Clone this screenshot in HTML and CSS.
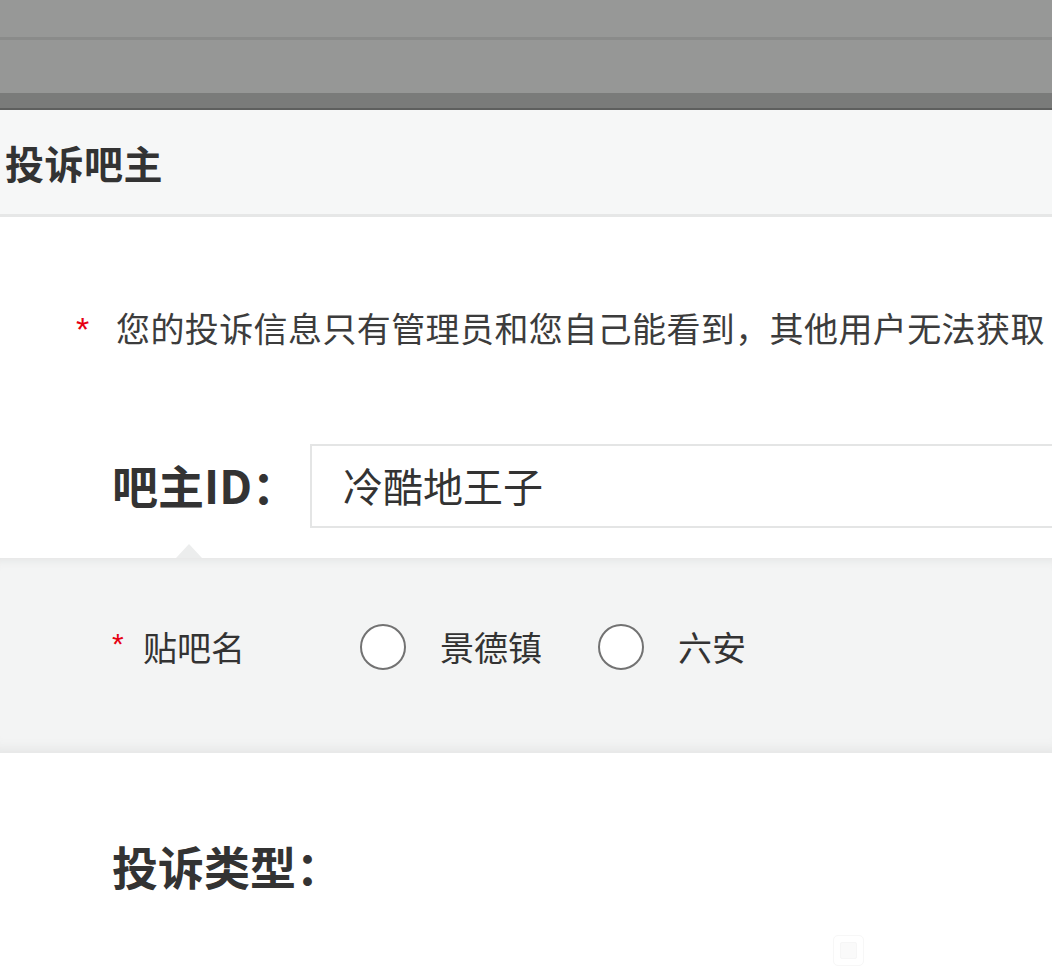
FILE: index.html
```html
<!DOCTYPE html>
<html lang="zh-CN">
<head>
<meta charset="utf-8">
<title>投诉吧主</title>
<link rel="stylesheet" href="styles.css">
</head>
<body>
<div class="topbar">
  <div class="band band-a"></div>
  <div class="band band-line"></div>
  <div class="band band-b"></div>
  <div class="band band-c"></div>
  <div class="band band-d"></div>
</div>
<div class="titlebar"><h1 class="title">投诉吧主</h1></div>
<p class="notice"><span class="star">*</span><span class="notice-text">您的投诉信息只有管理员和您自己能看到，其他用户无法获取</span></p>
<div class="id-row">
  <label class="id-label">吧主ID：</label>
  <div class="id-input">冷酷地王子</div>
</div>
<div class="panel">
  <span class="arrow"></span>
  <div class="panel-row">
    <span class="req"><span class="star small">*</span>贴吧名</span>
    <span class="option"><span class="radio"></span><span class="opt-text">景德镇</span></span>
    <span class="option"><span class="radio"></span><span class="opt-text">六安</span></span>
  </div>
</div>
<div class="type-row">
  <h2 class="type-title">投诉类型：</h2>
</div>
<div class="footer">
  <span class="ghost-icon"><span class="ghost-inner"></span></span>
</div>
</body>
</html>
```
FILE: styles.css
```css
* { box-sizing: border-box; }
html, body {
  margin: 0;
  padding: 0;
  background: #ffffff;
  width: 1052px;
  height: 980px;
  overflow: hidden;
}
body {
  font-family: "Noto Sans CJK SC", "Noto Sans", sans-serif;
  color: #333333;
  white-space: nowrap;
}
.topbar { display: flex; flex-direction: column; }
.band-a { height: 37px; background: #979897; }
.band-line { height: 3px; background: #8a8b8a; }
.band-b { height: 53px; background: #969796; }
.band-c { height: 15px; background: #7a7b7a; }
.band-d { height: 2px; background: #5e5f5e; }

.titlebar {
  height: 107px;
  background: #f6f7f7;
  border-bottom: 3px solid #e6e7e7;
  display: flex;
  align-items: center;
  padding-left: 5px;
}
.title {
  margin: 0;
  font-size: 39px;
  font-weight: 700;
  color: #333333;
  letter-spacing: 0.5px;
  line-height: 1;
}

.notice {
  margin: 0;
  padding: 89px 0 0 76px;
  font-size: 34px;
  line-height: 44px;
  color: #3c3c3c;
  display: flex;
  align-items: flex-start;
}
.star { color: #e60012; font-family: "Liberation Sans", sans-serif; }
.notice .star {
  font-size: 34px;
  width: 40px;
  line-height: 44px;
  height: 44px;
  margin-top: 1px;
}
.notice-text { letter-spacing: 0.4px; }

.id-row {
  display: flex;
  align-items: center;
  height: 84px;
  margin-top: 93px;
  padding-left: 112px;
}
.id-label {
  flex: none;
  font-size: 46px;
  font-weight: 700;
  color: #333333;
  width: 198px;
  line-height: 1;
  margin-top: -4px;
}
.id-input {
  height: 84px;
  width: 742px;
  flex: none;
  border: 2px solid #e4e5e5;
  border-right: none;
  background: #ffffff;
  font-size: 40px;
  line-height: 78px;
  padding-left: 31px;
  color: #333333;
}

.panel {
  position: relative;
  margin-top: 30px;
  height: 195px;
  background: #f3f4f4;
  box-shadow: inset 0 10px 10px -8px #e2e3e3, inset 0 -14px 12px -10px #e4e5e5;
  display: flex;
  align-items: center;
  padding-left: 112px;
}
.arrow {
  position: absolute;
  left: 176px;
  top: -14px;
  width: 0;
  height: 0;
  border-left: 13px solid transparent;
  border-right: 13px solid transparent;
  border-bottom: 14px solid #eceded;
}
.panel-row {
  display: flex;
  align-items: center;
  margin-top: -18px;
  font-size: 34px;
  color: #333333;
}
.req { flex: none; display: flex; align-items: center; width: 248px; }
.star.small {
  font-size: 30px;
  width: 31px;
  line-height: 30px;
  margin-top: -6px;
}
.option { display: flex; align-items: center; }
.radio {
  flex: none;
  width: 46px;
  height: 46px;
  border: 2px solid #727272;
  border-radius: 50%;
  background: #ffffff;
  margin-right: 34px;
}
.opt-text { width: 158px; }

.type-row {
  height: 170px;
  display: flex;
  align-items: center;
  padding-left: 112px;
  padding-top: 54px;
}
.type-title {
  margin: 0;
  font-size: 46px;
  font-weight: 700;
  color: #333333;
  line-height: 1;
}
.footer {
  display: flex;
  padding-left: 833px;
  padding-top: 12px;
}
.ghost-icon {
  width: 31px;
  height: 31px;
  border: 1px solid #f7f7f7;
  border-radius: 5px;
  display: flex;
  align-items: center;
  justify-content: center;
}
.ghost-inner {
  width: 17px;
  height: 17px;
  border: 1px solid #f6f6f6;
  background: #fafafa;
  border-radius: 2px;
}
```
